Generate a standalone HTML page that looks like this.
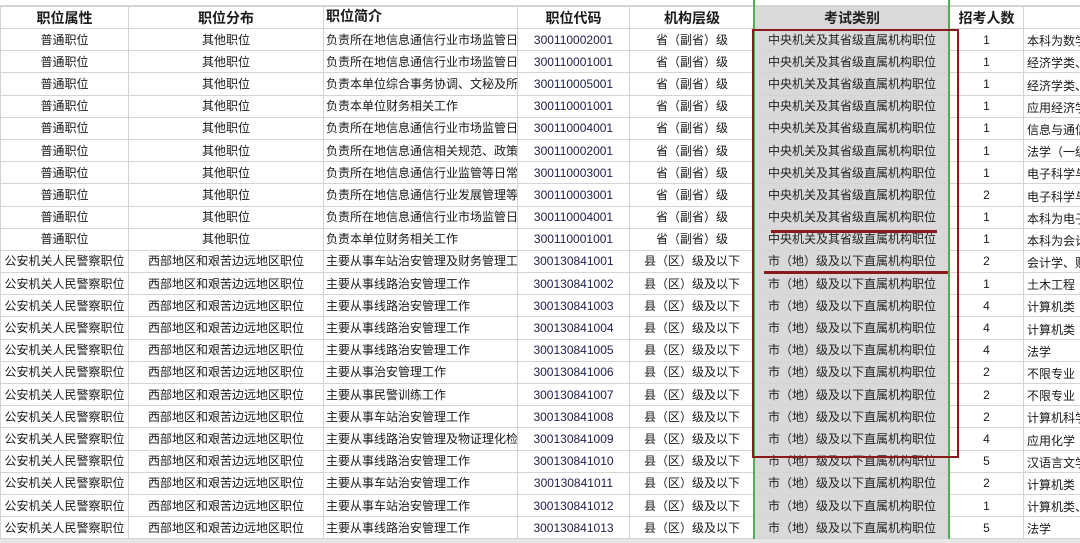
<!DOCTYPE html>
<html><head><meta charset="utf-8"><style>
*{margin:0;padding:0;box-sizing:border-box}
body{width:1080px;height:543px;overflow:hidden;background:#fff;font-family:"Liberation Sans","Noto Sans CJK SC",sans-serif;color:#1a1a1a;position:relative}
table{position:absolute;left:0;top:6px;border-collapse:collapse;table-layout:fixed;width:1100px}
td{border:1px solid #d4d4d4;height:22.2px;font-size:12px;text-align:center;white-space:nowrap;overflow:hidden;padding:0 2px;line-height:20px}
tr.h td{font-size:14px;font-weight:bold;height:22px}
td.l{text-align:left}
td.g{background:#d9d9d9;color:#222}
td.m{text-align:left;vertical-align:bottom;line-height:18px;padding-left:3px}
td.c{color:#1d1d4a}
.gl{position:absolute;top:0;width:2px;height:543px;background:#4caf50}
.top{position:absolute;left:0;top:0;width:1080px;height:6px;background:#fff;border-bottom:1px solid #d4d4d4}
</style></head><body>
<table>
<colgroup><col style="width:128px"><col style="width:195px"><col style="width:194px"><col style="width:112px"><col style="width:125px"><col style="width:195px"><col style="width:74px"><col style="width:77px"></colgroup>
<tr class="h"><td>职位属性</td><td>职位分布</td><td class="l" style="vertical-align:top;line-height:18px">职位简介</td><td>职位代码</td><td>机构层级</td><td class="g">考试类别</td><td>招考人数</td><td></td></tr>
<tr><td>普通职位</td><td>其他职位</td><td class="l">负责所在地信息通信行业市场监管日</td><td class="c">300110002001</td><td>省（副省）级</td><td class="g">中央机关及其省级直属机构职位</td><td>1</td><td class="m">本科为数学</td></tr>
<tr><td>普通职位</td><td>其他职位</td><td class="l">负责所在地信息通信行业市场监管日</td><td class="c">300110001001</td><td>省（副省）级</td><td class="g">中央机关及其省级直属机构职位</td><td>1</td><td class="m">经济学类、</td></tr>
<tr><td>普通职位</td><td>其他职位</td><td class="l">负责本单位综合事务协调、文秘及所</td><td class="c">300110005001</td><td>省（副省）级</td><td class="g">中央机关及其省级直属机构职位</td><td>1</td><td class="m">经济学类、</td></tr>
<tr><td>普通职位</td><td>其他职位</td><td class="l">负责本单位财务相关工作</td><td class="c">300110001001</td><td>省（副省）级</td><td class="g">中央机关及其省级直属机构职位</td><td>1</td><td class="m">应用经济学</td></tr>
<tr><td>普通职位</td><td>其他职位</td><td class="l">负责所在地信息通信行业市场监管日</td><td class="c">300110004001</td><td>省（副省）级</td><td class="g">中央机关及其省级直属机构职位</td><td>1</td><td class="m">信息与通信</td></tr>
<tr><td>普通职位</td><td>其他职位</td><td class="l">负责所在地信息通信相关规范、政策</td><td class="c">300110002001</td><td>省（副省）级</td><td class="g">中央机关及其省级直属机构职位</td><td>1</td><td class="m">法学（一级</td></tr>
<tr><td>普通职位</td><td>其他职位</td><td class="l">负责所在地信息通信行业监管等日常</td><td class="c">300110003001</td><td>省（副省）级</td><td class="g">中央机关及其省级直属机构职位</td><td>1</td><td class="m">电子科学与</td></tr>
<tr><td>普通职位</td><td>其他职位</td><td class="l">负责所在地信息通信行业发展管理等</td><td class="c">300110003001</td><td>省（副省）级</td><td class="g">中央机关及其省级直属机构职位</td><td>2</td><td class="m">电子科学与</td></tr>
<tr><td>普通职位</td><td>其他职位</td><td class="l">负责所在地信息通信行业市场监管日</td><td class="c">300110004001</td><td>省（副省）级</td><td class="g">中央机关及其省级直属机构职位</td><td>1</td><td class="m">本科为电子</td></tr>
<tr><td>普通职位</td><td>其他职位</td><td class="l">负责本单位财务相关工作</td><td class="c">300110001001</td><td>省（副省）级</td><td class="g">中央机关及其省级直属机构职位</td><td>1</td><td class="m">本科为会计</td></tr>
<tr><td>公安机关人民警察职位</td><td>西部地区和艰苦边远地区职位</td><td class="l">主要从事车站治安管理及财务管理工</td><td class="c">300130841001</td><td>县（区）级及以下</td><td class="g">市（地）级及以下直属机构职位</td><td>2</td><td class="m">会计学、财</td></tr>
<tr><td>公安机关人民警察职位</td><td>西部地区和艰苦边远地区职位</td><td class="l">主要从事线路治安管理工作</td><td class="c">300130841002</td><td>县（区）级及以下</td><td class="g">市（地）级及以下直属机构职位</td><td>1</td><td class="m">土木工程</td></tr>
<tr><td>公安机关人民警察职位</td><td>西部地区和艰苦边远地区职位</td><td class="l">主要从事线路治安管理工作</td><td class="c">300130841003</td><td>县（区）级及以下</td><td class="g">市（地）级及以下直属机构职位</td><td>4</td><td class="m">计算机类</td></tr>
<tr><td>公安机关人民警察职位</td><td>西部地区和艰苦边远地区职位</td><td class="l">主要从事线路治安管理工作</td><td class="c">300130841004</td><td>县（区）级及以下</td><td class="g">市（地）级及以下直属机构职位</td><td>4</td><td class="m">计算机类</td></tr>
<tr><td>公安机关人民警察职位</td><td>西部地区和艰苦边远地区职位</td><td class="l">主要从事线路治安管理工作</td><td class="c">300130841005</td><td>县（区）级及以下</td><td class="g">市（地）级及以下直属机构职位</td><td>4</td><td class="m">法学</td></tr>
<tr><td>公安机关人民警察职位</td><td>西部地区和艰苦边远地区职位</td><td class="l">主要从事治安管理工作</td><td class="c">300130841006</td><td>县（区）级及以下</td><td class="g">市（地）级及以下直属机构职位</td><td>2</td><td class="m">不限专业</td></tr>
<tr><td>公安机关人民警察职位</td><td>西部地区和艰苦边远地区职位</td><td class="l">主要从事民警训练工作</td><td class="c">300130841007</td><td>县（区）级及以下</td><td class="g">市（地）级及以下直属机构职位</td><td>2</td><td class="m">不限专业</td></tr>
<tr><td>公安机关人民警察职位</td><td>西部地区和艰苦边远地区职位</td><td class="l">主要从事车站治安管理工作</td><td class="c">300130841008</td><td>县（区）级及以下</td><td class="g">市（地）级及以下直属机构职位</td><td>2</td><td class="m">计算机科学</td></tr>
<tr><td>公安机关人民警察职位</td><td>西部地区和艰苦边远地区职位</td><td class="l">主要从事线路治安管理及物证理化检</td><td class="c">300130841009</td><td>县（区）级及以下</td><td class="g">市（地）级及以下直属机构职位</td><td>4</td><td class="m">应用化学</td></tr>
<tr><td>公安机关人民警察职位</td><td>西部地区和艰苦边远地区职位</td><td class="l">主要从事线路治安管理工作</td><td class="c">300130841010</td><td>县（区）级及以下</td><td class="g">市（地）级及以下直属机构职位</td><td>5</td><td class="m">汉语言文学</td></tr>
<tr><td>公安机关人民警察职位</td><td>西部地区和艰苦边远地区职位</td><td class="l">主要从事车站治安管理工作</td><td class="c">300130841011</td><td>县（区）级及以下</td><td class="g">市（地）级及以下直属机构职位</td><td>2</td><td class="m">计算机类</td></tr>
<tr><td>公安机关人民警察职位</td><td>西部地区和艰苦边远地区职位</td><td class="l">主要从事车站治安管理工作</td><td class="c">300130841012</td><td>县（区）级及以下</td><td class="g">市（地）级及以下直属机构职位</td><td>1</td><td class="m">计算机类、</td></tr>
<tr><td>公安机关人民警察职位</td><td>西部地区和艰苦边远地区职位</td><td class="l">主要从事线路治安管理工作</td><td class="c">300130841013</td><td>县（区）级及以下</td><td class="g">市（地）级及以下直属机构职位</td><td>5</td><td class="m">法学</td></tr>
</table>
<div class="top"></div>
<div class="gl" style="left:753px"></div>
<div class="gl" style="left:948px"></div>
<div style="position:absolute;left:752px;top:29px;width:207px;height:429px;border:2px solid #8b1a1a"></div>
<div style="position:absolute;left:771px;top:230px;width:166px;height:3px;background:#8b1a1a"></div>
<div style="position:absolute;left:764px;top:271px;width:184px;height:3px;background:#8b1a1a"></div>
<div style="position:absolute;left:0;top:539px;width:1080px;height:4px;background:#e6e6e6"></div>
</body></html>
